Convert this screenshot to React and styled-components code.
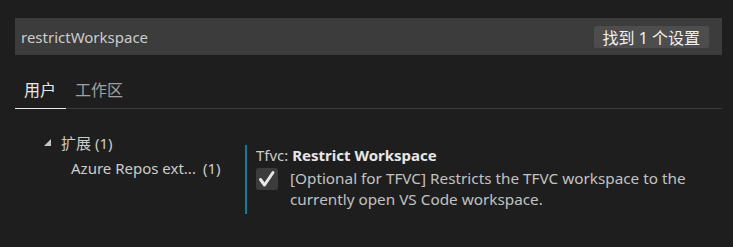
import React from 'react';
import styled, { createGlobalStyle } from 'styled-components';

const Global = createGlobalStyle`
  html, body {
    margin: 0;
    padding: 0;
    background: #1e1e1e;
  }
  body {
    font-family: "Noto Sans", "Noto Sans CJK SC", sans-serif;
    color: #cccccc;
  }
`

const Page = styled.div`
  width: 733px;
  height: 247px;
  box-sizing: border-box;
  padding: 18px 11px 0 15px;
  overflow: hidden;
`

const SearchBox = styled.div`
  height: 37px;
  background: #3c3c3c;
  display: flex;
  align-items: center;
  justify-content: space-between;
  padding: 0 13px 0 6px;
`

const SearchText = styled.span`
  font-size: 15px;
  color: #cccccc;
`

const Badge = styled.span`
  height: 22px;
  display: flex;
  align-items: center;
  padding: 0 9px;
  border-radius: 2px;
  background: #4d4d4d;
  color: #f0f0f0;
  font-size: 16px;
`

const Tabs = styled.div`
  margin-top: 16px;
  height: 37px;
  display: flex;
  border-bottom: 1px solid #3c3c3c;
`

const Tab = styled.div`
  padding: 0 10px 0 9px;
  display: flex;
  align-items: center;
  font-size: 16px;
  color: ${p => (p.active ? '#e7e7e7' : '#a0a0a0')};
  margin-bottom: -1px;
  padding-bottom: 2px;
  border-bottom: 1px solid ${p => (p.active ? '#e7e7e7' : 'transparent')};
`

const Body = styled.div`
  display: grid;
  grid-template-columns: 230px 1fr;
`

const Tree = styled.div`
  padding-top: 20px;
`

const TreeRow = styled.div`
  height: 26px;
  display: flex;
  align-items: center;
  gap: 10px;
  padding-left: ${p => p.indent}px;
  font-size: 15px;
  color: #cccccc;
`

const Count = styled.span`
  margin-left: ${p => p.gap || 0}px;
`

const Setting = styled.div`
  margin-top: 36px;
  border-left: 2px solid #0c7d9d;
  padding: 0 0 4px 9px;
`

const Title = styled.div`
  height: 20px;
  line-height: 20px;
  font-size: 15px;
  color: #cccccc;
  b {
    color: #e7e7e7;
    font-weight: 700;
  }
`

const Row = styled.div`
  margin-top: 3px;
  display: flex;
  align-items: flex-start;
  gap: 12px;
`

const Check = styled.div`
  flex: none;
  width: 22px;
  height: 22px;
  border-radius: 3px;
  background: #3c3c3c;
  display: flex;
  align-items: center;
  justify-content: center;
`

const Desc = styled.div`
  font-size: 15.3px;
  line-height: 21px;
  color: #c2c2c2;
`

export default function App() {
  return (
    <Page>
      <Global />
      <SearchBox>
        <SearchText>restrictWorkspace</SearchText>
        <Badge>找到 1 个设置</Badge>
      </SearchBox>

      <Tabs>
        <Tab active>用户</Tab>
        <Tab>工作区</Tab>
      </Tabs>

      <Body>
        <Tree>
          <TreeRow indent={29}>
            <svg width="7" height="7" viewBox="0 0 7 7">
              <polygon points="7,0 7,7 0,7" fill="#c5c5c5" />
            </svg>
            <span>扩展 (1)</span>
          </TreeRow>
          <TreeRow indent={56}>
            <span>Azure Repos ext...<Count gap={7}>(1)</Count></span>
          </TreeRow>
        </Tree>

        <Setting>
          <Title>Tfvc: <b>Restrict Workspace</b></Title>
          <Row>
            <Check>
              <svg width="22" height="22" viewBox="0 0 22 22">
                <path d="M4.5 11.5 L8.5 17 L17 4.5" fill="none" stroke="#e8e8e8" strokeWidth="3" strokeLinecap="round" strokeLinejoin="round" />
              </svg>
            </Check>
            <Desc>[Optional for TFVC] Restricts the TFVC workspace to the currently open VS Code workspace.</Desc>
          </Row>
        </Setting>
      </Body>
    </Page>
  );
}
